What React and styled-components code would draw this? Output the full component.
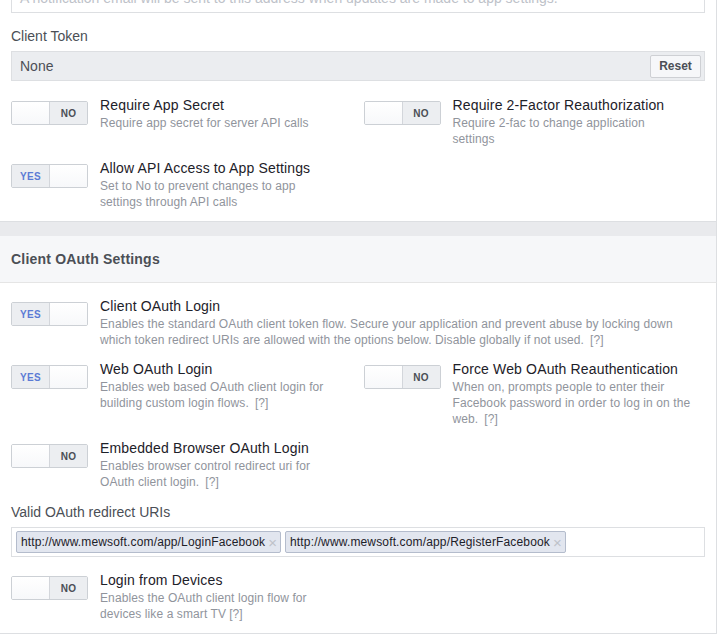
import styled, { createGlobalStyle } from "styled-components";

const GlobalStyle = createGlobalStyle`
  html, body {
    margin: 0;
    padding: 0;
    background: #fff;
    overflow: hidden;
  }
  body {
    font-family: "Liberation Sans", Arial, Helvetica, sans-serif;
    color: #1d2129;
  }
`;

const Page = styled.div`
  width: 717px;
  display: flex;
  flex-direction: column;
`;

const Card = styled.div`
  background: #fff;
  border-right: 1px solid #dddfe2;
  border-bottom: 1px solid #dddfe2;
  padding: ${(p) => p.$pad || "0 11px 11px"};
  display: flex;
  flex-direction: column;
`;

const Gap = styled.div`
  height: 14px;
  background: #e9eaed;
  border-right: 1px solid #dddfe2;
`;

const SectionHeader = styled.div`
  height: 46px;
  background: #f6f7f9;
  border-right: 1px solid #dddfe2;
  border-bottom: 1px solid #e5e5e5;
  display: flex;
  align-items: center;
  padding: 0 11px;
  font-size: 14px;
  font-weight: bold;
  letter-spacing: 0.2px;
  color: #4b4f56;
`;

const TextInput = styled.div`
  margin-top: -17px;
  height: 28px;
  border: 1px solid #dddfe2;
  padding: 0 8px;
  display: flex;
  align-items: center;
  font-size: 14px;
  color: #bec2c9;
  white-space: nowrap;
  overflow: hidden;
`;

const Label = styled.div`
  margin-top: ${(p) => p.$top || 14}px;
  font-size: 14px;
  line-height: 18px;
  color: #4b4f56;
`;

const TokenBox = styled.div`
  margin-top: 6px;
  height: 28px;
  background: #ebedf0;
  border: 1px solid #dddfe2;
  display: flex;
  align-items: center;
  justify-content: space-between;
  padding: 0 3px 0 8px;
  font-size: 14px;
  color: #4b4f56;
`;

const ResetButton = styled.button`
  height: 23px;
  width: 51px;
  background: #f6f7f9;
  border: 1px solid #ced0d4;
  border-radius: 2px;
  font-family: inherit;
  font-size: 12px;
  font-weight: bold;
  color: #4b4f56;
  padding: 0;
`;

const Grid = styled.div`
  margin-top: ${(p) => p.$top || 0}px;
  display: grid;
  grid-template-columns: 1fr 1fr;
  column-gap: 11px;
  row-gap: 12px;
`;

const Row = styled.div`
  display: flex;
  align-items: flex-start;
  gap: 12px;
  grid-column: ${(p) => (p.$wide ? "1 / -1" : "auto")};
  margin-top: ${(p) => p.$top || 0}px;
`;

const Toggle = styled.div`
  flex: none;
  margin-top: 5px;
  width: 75px;
  height: 22px;
  border: 1px solid #ccd0d5;
  border-radius: 2px;
  display: flex;
  overflow: hidden;
`;

const ToggleHalf = styled.div`
  flex: 1;
  display: flex;
  align-items: center;
  justify-content: center;
  font-size: 10px;
  font-weight: bold;
  letter-spacing: 0.3px;
  color: ${(p) => (p.$on ? "#5b7bd5" : "#4b4f56")};
  background: ${(p) => (p.$label ? "#eceef1" : "linear-gradient(#fff, #f7f8fa)")};
  & + & {
    border-left: 1px solid #d3d6db;
  }
`;

const TextCol = styled.div`
  max-width: ${(p) => (p.$wide ? "none" : "240px")};
  display: flex;
  flex-direction: column;
`;

const Title = styled.div`
  font-size: 14px;
  line-height: 18px;
  letter-spacing: 0.15px;
  color: #1d2129;
`;

const Desc = styled.div`
  margin-top: 1px;
  font-size: 12px;
  line-height: 16px;
  letter-spacing: 0.1px;
  color: #90949c;
`;

const Help = styled.span`
  margin-left: ${(p) => p.$gap || 6}px;
  color: #90949c;
`;

const TagBox = styled.div`
  margin-top: 6px;
  border: 1px solid #dddfe2;
  padding: 3px 4px;
  display: flex;
  gap: 4px;
`;

const Tag = styled.div`
  height: 20px;
  display: flex;
  align-items: center;
  gap: 3px;
  padding: 0 3px 0 4px;
  background: #e2e6ef;
  border: 1px solid #b4bccc;
  border-radius: 2px;
  font-size: 12px;
  letter-spacing: 0.15px;
  color: #1d2129;
  & span {
    color: #bec2c9;
    font-size: 15px;
    line-height: 1;
  }
`;

const Switch = ({ on }) => (
  <Toggle>
    {on ? (
      <>
        <ToggleHalf $label $on>YES</ToggleHalf>
        <ToggleHalf />
      </>
    ) : (
      <>
        <ToggleHalf />
        <ToggleHalf $label>NO</ToggleHalf>
      </>
    )}
  </Toggle>
);

const Setting = ({ on, title, children, help, helpGap, wide, top }) => (
  <Row $wide={wide} $top={top}>
    <Switch on={on} />
    <TextCol $wide={wide}>
      <Title>{title}</Title>
      <Desc>
        {children}
        {help && <Help $gap={helpGap}>[?]</Help>}
      </Desc>
    </TextCol>
  </Row>
);

const App = () => {
  return (
    <Page>
      <GlobalStyle />
      <Card>
        <TextInput>
          A notification email will be sent to this address when updates are made to app settings.
        </TextInput>
        <Label>Client Token</Label>
        <TokenBox>
          None
          <ResetButton>Reset</ResetButton>
        </TokenBox>
        <Grid $top={15}>
          <Setting title="Require App Secret">Require app secret for server API calls</Setting>
          <Setting title="Require 2-Factor Reauthorization">
            Require 2-fac to change application
            <br />
            settings
          </Setting>
          <Setting on title="Allow API Access to App Settings">
            Set to No to prevent changes to app settings through API calls
          </Setting>
        </Grid>
      </Card>

      <Gap />
      <SectionHeader>Client OAuth Settings</SectionHeader>

      <Card $pad="14px 11px 11px">
        <Grid>
          <Setting on wide help title="Client OAuth Login">
            Enables the standard OAuth client token flow. Secure your application and prevent abuse
            by locking down which token redirect URIs are allowed with the options below. Disable
            globally if not used.
          </Setting>
          <Setting on help title="Web OAuth Login">
            Enables web based OAuth client login for building custom login flows.
          </Setting>
          <Setting help title="Force Web OAuth Reauthentication">
            When on, prompts people to enter their Facebook password in order to log in on the web.
          </Setting>
          <Setting help title="Embedded Browser OAuth Login">
            Enables browser control redirect uri for OAuth client login.
          </Setting>
        </Grid>

        <Label $top={13}>Valid OAuth redirect URIs</Label>
        <TagBox>
          <Tag>
            http://www.mewsoft.com/app/LoginFacebook<span>×</span>
          </Tag>
          <Tag>
            http://www.mewsoft.com/app/RegisterFacebook<span>×</span>
          </Tag>
        </TagBox>

        <Setting top={14} help helpGap={3} title="Login from Devices">
          Enables the OAuth client login flow for devices like a smart TV
        </Setting>
      </Card>
    </Page>
  );
};

export default App;
